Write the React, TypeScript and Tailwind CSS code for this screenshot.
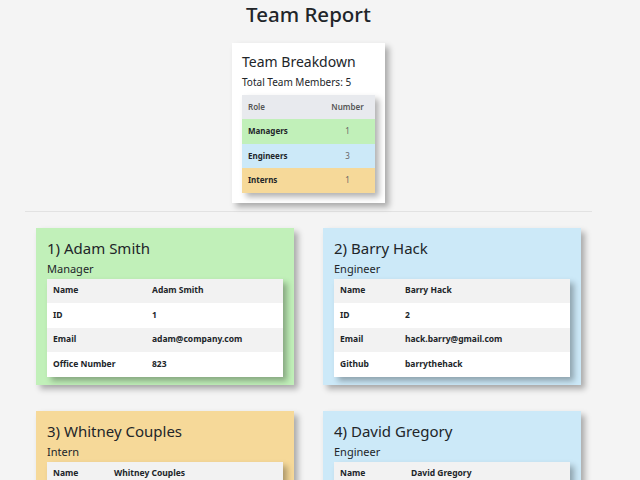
const members = [
  {
    title: "1) Adam Smith",
    role: "Manager",
    bg: "bg-[#c1f0b9]",
    keyW: "w-[99px]",
    rows: [
      ["Name", "Adam Smith"],
      ["ID", "1"],
      ["Email", "adam@company.com"],
      ["Office Number", "823"],
    ],
  },
  {
    title: "2) Barry Hack",
    role: "Engineer",
    bg: "bg-[#cce9f8]",
    keyW: "w-[65px]",
    rows: [
      ["Name", "Barry Hack"],
      ["ID", "2"],
      ["Email", "hack.barry@gmail.com"],
      ["Github", "barrythehack"],
    ],
  },
  {
    title: "3) Whitney Couples",
    role: "Intern",
    bg: "bg-[#f6d999]",
    keyW: "w-[61px]",
    rows: [
      ["Name", "Whitney Couples"],
      ["ID", "3"],
      ["Email", "whitney@school.edu"],
      ["School", "State University"],
    ],
  },
  {
    title: "4) David Gregory",
    role: "Engineer",
    bg: "bg-[#cce9f8]",
    keyW: "w-[71px]",
    rows: [
      ["Name", "David Gregory"],
      ["ID", "4"],
      ["Email", "david.gregory@gmail.com"],
      ["Github", "dgregory"],
    ],
  },
];

const breakdown = [
  { role: "Managers", count: 1, bg: "bg-[#c1f0b9]" },
  { role: "Engineers", count: 3, bg: "bg-[#cce9f8]" },
  { role: "Interns", count: 1, bg: "bg-[#f6d999]" },
];

const MemberCard = ({ m }: { m: (typeof members)[number] }) => (
  <div className={`${m.bg} px-[11px] pt-[9px] pb-[8px] shadow-[4px_4px_6px_rgba(0,0,0,0.3)]`}>
    <h2 className="text-[15px] leading-[22px] text-[#212529]">{m.title}</h2>
    <div className="text-[11px] leading-[18px] mt-[1px] mb-[1px] text-[#212529]">{m.role}</div>
    <table className="w-full shadow-[4px_4px_6px_rgba(0,0,0,0.3)] text-[8.5px] font-bold text-[#212529]">
      <tbody>
        {m.rows.map(([k, v], i) => (
          <tr key={k} className={`h-[24.5px] ${i % 2 === 0 ? "bg-[#f2f2f2]" : "bg-white"}`}>
            <td className={`${m.keyW} pl-[6px] align-middle`}>{k}</td>
            <td className="pl-[6px] align-middle">{v}</td>
          </tr>
        ))}
      </tbody>
    </table>
  </div>
);

export default function App() {
  return (
    <div className="min-h-screen bg-[#f4f4f4] font-['Noto_Sans',sans-serif] text-[#212529]">
      <div className="w-[617px] pb-10">
        <h1 className="text-center text-[20.5px] leading-[28px] font-medium">Team Report</h1>
        <div className="flex justify-center mt-[15px]">
          <div className="w-[153px] bg-white p-[10px] pt-[9px] shadow-[4px_4px_6px_rgba(0,0,0,0.3)]">
            <h2 className="text-[14px] leading-[20px]">Team Breakdown</h2>
            <div className="text-[10px] leading-[16px] mt-[2px] mb-[5px]">Total Team Members: 5</div>
            <table className="w-full text-[8px] shadow-[4px_4px_6px_rgba(0,0,0,0.3)]">
              <thead>
                <tr className="h-[24px] bg-[#e8eaee] text-[#555]">
                  <th className="pl-[6px] text-left font-semibold">Role</th>
                  <th className="text-center font-semibold">Number</th>
                </tr>
              </thead>
              <tbody>
                {breakdown.map((b) => (
                  <tr key={b.role} className={`h-[24.5px] ${b.bg}`}>
                    <td className="pl-[6px] font-bold">{b.role}</td>
                    <td className="text-center text-[#666]">{b.count}</td>
                  </tr>
                ))}
              </tbody>
            </table>
          </div>
        </div>
        <hr className="mx-[25px] mt-[8px] border-t border-[#e2e2e2]" />
        <div className="grid grid-cols-[258px_258px] gap-x-[29px] gap-y-[26px] justify-center mt-[16px]">
          {members.map((m) => (
            <MemberCard key={m.title} m={m} />
          ))}
        </div>
      </div>
    </div>
  );
}
